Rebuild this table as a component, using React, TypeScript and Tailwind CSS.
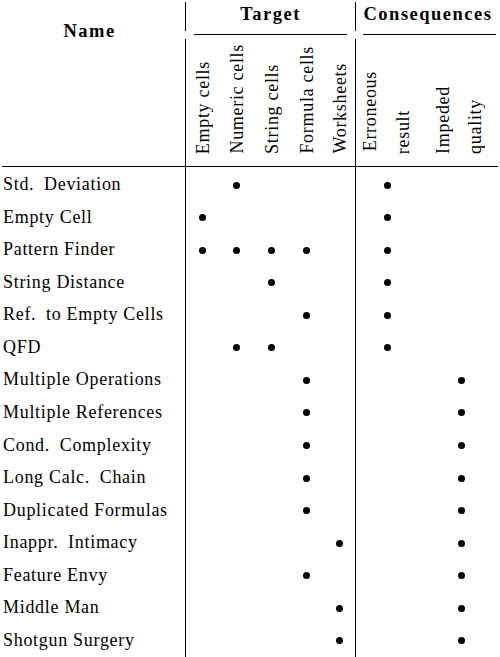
import React from "react";

type Row = { name: string; t: number[]; c: number[] };

const rows: Row[] = [
  { name: "Std.\u2002Deviation", t: [1], c: [0] },
  { name: "Empty Cell", t: [0], c: [0] },
  { name: "Pattern Finder", t: [0, 1, 2, 3], c: [0] },
  { name: "String Distance", t: [2], c: [0] },
  { name: "Ref.\u2002to Empty Cells", t: [3], c: [0] },
  { name: "QFD", t: [1, 2], c: [0] },
  { name: "Multiple Operations", t: [3], c: [1] },
  { name: "Multiple References", t: [3], c: [1] },
  { name: "Cond.\u2002Complexity", t: [3], c: [1] },
  { name: "Long Calc.\u2002Chain", t: [3], c: [1] },
  { name: "Duplicated Formulas", t: [3], c: [1] },
  { name: "Inappr.\u2002Intimacy", t: [4], c: [1] },
  { name: "Feature Envy", t: [3], c: [1] },
  { name: "Middle Man", t: [4], c: [1] },
  { name: "Shotgun Surgery", t: [4], c: [1] },
];

const targetWidths = ["w-[33px]", "w-[35px]", "w-[35px]", "w-[35px]", "w-[31px]"];
const targetLabels = ["Empty cells", "Numeric cells", "String cells", "Formula cells", "Worksheets"];

function Dot() {
  return <div className="w-[7px] h-[7px] rounded-full bg-black" />;
}

function VLabel({ children, className = "" }: { children: React.ReactNode; className?: string }) {
  return (
    <div
      className={
        "[writing-mode:vertical-rl] rotate-180 leading-[20px] w-[20px] whitespace-nowrap " + className
      }
    >
      {children}
    </div>
  );
}

export default function App() {
  return (
    <div className="w-[500px] h-[657px] bg-white text-black overflow-hidden flex flex-col [font-family:'Liberation_Serif','Times_New_Roman',serif] text-[18px] tracking-[0.7px]">
      {/* Header */}
      <div className="flex h-[166px] shrink-0">
        <div className="w-[185px] pt-[21px] pr-[6px] text-center leading-[20px] font-bold text-[18.5px] tracking-[1.5px]">
          Name
        </div>
        <div className="w-px flex flex-col">
          <div className="mt-[2px] h-[29px] bg-black" />
          <div className="mt-[8px] flex-1 bg-black" />
        </div>
        <div className="w-[169px] flex flex-col">
          <div className="h-[34px] pt-[4px] leading-[20px] text-center font-bold text-[18.5px] tracking-[1.5px]">
            Target
          </div>
          <div className="h-px mx-[8px] bg-black" />
          <div className="flex-1 flex items-end pb-[12px]">
            {targetLabels.map((l, i) => (
              <div key={l} className={targetWidths[i] + " flex justify-center"}>
                <VLabel>{l}</VLabel>
              </div>
            ))}
          </div>
        </div>
        <div className="w-px flex flex-col">
          <div className="mt-[2px] h-[29px] bg-black" />
          <div className="mt-[8px] flex-1 bg-black" />
        </div>
        <div className="w-[144px] flex flex-col">
          <div className="h-[34px] pt-[4px] leading-[20px] text-center font-bold text-[18.5px] tracking-[1.5px]">
            Consequences
          </div>
          <div className="h-px ml-[7px] mr-[4px] bg-black" />
          <div className="flex-1 flex items-end pb-[12px]">
            <VLabel className="ml-[4px] mb-[3px]">Erroneous</VLabel>
            <VLabel className="ml-[13px]">result</VLabel>
            <VLabel className="ml-[20px]">Impeded</VLabel>
            <VLabel className="ml-[12px]">quality</VLabel>
          </div>
        </div>
      </div>

      {/* Rule */}
      <div className="h-px mx-[2px] bg-black shrink-0" />

      {/* Body */}
      <div className="flex-1 flex flex-col">
        {rows.map((r) => (
          <div key={r.name} className="flex h-[32.57px] shrink-0">
            <div className="w-[185px] pl-[3px] pt-[7px] leading-[20px] whitespace-nowrap">{r.name}</div>
            <div className="w-[170px] border-l border-black flex">
              {targetWidths.map((w, i) => (
                <div key={i} className={w + " flex justify-center pt-[14.5px]"}>
                  {r.t.includes(i) ? <Dot /> : null}
                </div>
              ))}
            </div>
            <div className="w-[145px] border-l border-black flex">
              <div className="w-[62px] flex justify-center pt-[14.5px]">
                {r.c.includes(0) ? <Dot /> : null}
              </div>
              <div className="w-[82px] pl-[40px] pt-[14.5px]">
                {r.c.includes(1) ? <Dot /> : null}
              </div>
            </div>
          </div>
        ))}
        <div className="flex-1 flex">
          <div className="w-[185px]" />
          <div className="w-[170px] border-l border-black" />
          <div className="w-[145px] border-l border-black" />
        </div>
      </div>
    </div>
  );
}
